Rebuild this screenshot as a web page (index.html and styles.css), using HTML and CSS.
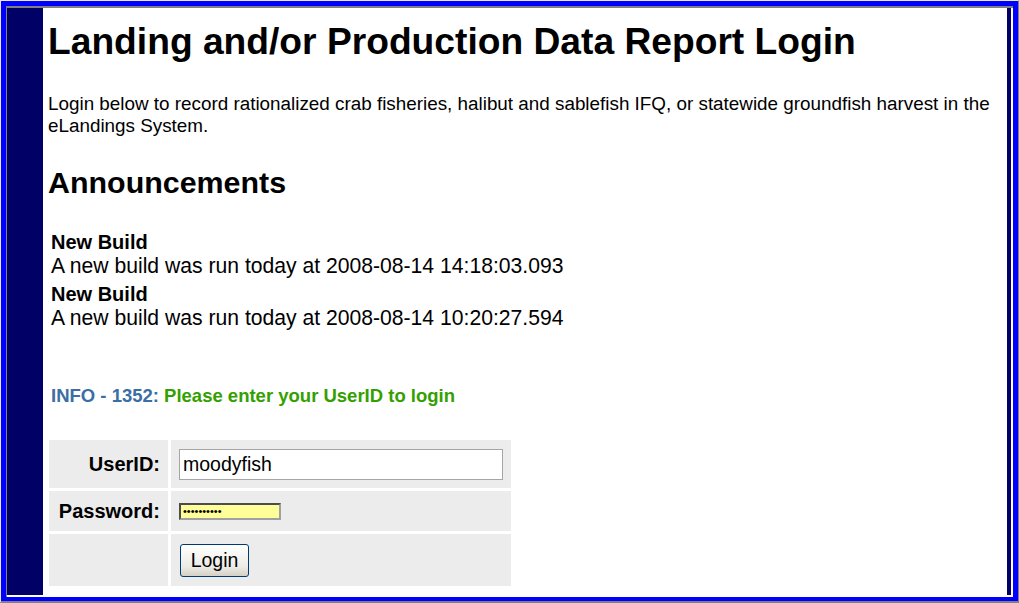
FILE: index.html
```html
<!DOCTYPE html>
<html lang="en">
<head>
  <meta charset="UTF-8" />
  <title>Landing and/or Production Data Report Login</title>
  <link rel="stylesheet" href="styles.css">
</head>
<body>
  <div class="outer">
    <div class="frame">
      <div class="page">
        <div class="sidebar"></div>
        <div class="content">
          <h1>Landing and/or Production Data Report Login</h1>
          <p class="intro">Login below to record rationalized crab fisheries, halibut and sablefish IFQ, or statewide groundfish harvest in the eLandings System.</p>
          <h2>Announcements</h2>
          <div class="news">
            <div class="news-item">
              <strong>New Build</strong>
              <span>A new build was run today at 2008-08-14 14:18:03.093</span>
            </div>
            <div class="news-item">
              <strong>New Build</strong>
              <span>A new build was run today at 2008-08-14 10:20:27.594</span>
            </div>
          </div>
          <p class="info"><span class="info-code">INFO - 1352:</span> <span class="info-msg">Please enter your UserID to login</span></p>
          <form class="login" onsubmit="return false;">
            <table class="login-table">
              <tr class="row-user">
                <th>UserID:</th>
                <td><input class="user" type="text" value="moodyfish"></td>
              </tr>
              <tr class="row-pass">
                <th>Password:</th>
                <td><input class="pass" type="password" value="moodyfish1"></td>
              </tr>
              <tr class="row-btn">
                <th></th>
                <td><button class="btn" type="submit">Login</button></td>
              </tr>
            </table>
          </form>
        </div>
        <div class="rightbar"></div>
      </div>
    </div>
  </div>
</body>
</html>
```

FILE: styles.css
```css
html, body {
  margin: 0;
  padding: 0;
  background: #fff;
}
body {
  font-family: "Liberation Sans", Arial, sans-serif;
  color: #000;
}
.outer {
  width: 1019px;
  height: 603px;
  box-sizing: border-box;
  border-style: solid;
  border-width: 1px 1px 2px 1px;
  border-color: #e8e8e8 #808080 #808080 #e8e8e8;
}
.frame {
  height: 100%;
  box-sizing: border-box;
  border-style: solid;
  border-color: #0000ff;
  border-width: 5px 5px 4px 5px;
}
.page {
  display: flex;
  height: 100%;
  box-sizing: border-box;
  border-top: 2px solid #808080;
  border-left: 1px solid #808080;
  padding: 0 2px 2px 0;
  background: #fff;
}
.sidebar {
  width: 36px;
  background: #000066;
}
.rightbar {
  width: 4px;
  background: #000066;
}
.content {
  flex: 1;
  padding-left: 5px;
  overflow: hidden;
}
h1 {
  font-size: 37.2px;
  font-weight: bold;
  margin: 11px 0 0;
  line-height: 44px;
}
.intro {
  font-size: 18.85px;
  line-height: 22px;
  margin: 30px 0 0;
}
h2 {
  font-size: 30.4px;
  margin: 27px 0 0;
  line-height: 36px;
}
.news {
  margin: 30px 0 0 3px;
}
.news-item {
  display: flex;
  flex-direction: column;
  font-size: 21.15px;
  line-height: 24px;
  margin-bottom: 4px;
}
.news-item strong {
  font-size: 20px;
}
.info {
  font-size: 18.5px;
  font-weight: bold;
  margin: 55px 0 0 3px;
}
.info-code {
  color: #3a6ea5;
}
.info-msg {
  color: #33a000;
}
.login {
  margin: 30px 0 0 -2px;
}
.login-table {
  border-spacing: 3px;
}
.login-table th,
.login-table td {
  background: #ececec;
  font-size: 20px;
  padding: 0 8px;
}
.login-table th {
  width: 103px;
  text-align: right;
}
.login-table td {
  width: 324px;
}
.row-user th, .row-user td { height: 48px; }
.row-pass th, .row-pass td { height: 40px; }
.row-btn th, .row-btn td { height: 52px; }
.user {
  display: block;
  box-sizing: border-box;
  width: 324px;
  height: 31px;
  border: 1px solid #a5a5a5;
  font-family: "Liberation Sans", Arial, sans-serif;
  font-size: 19.5px;
  padding: 0 3px;
  margin: 0;
}
.pass {
  display: block;
  box-sizing: border-box;
  width: 102px;
  height: 17px;
  background: #ffff99;
  border: 2px inset #a0a0a0;
  font-size: 11px;
  padding: 0 2px;
  margin: 0;
}
.btn {
  display: block;
  width: 69px;
  height: 33px;
  margin-left: 1px;
  border: 1px solid #003c74;
  border-radius: 3px;
  background: linear-gradient(#ffffff, #ecebe6 70%, #d6d0c5);
  font-family: "Liberation Sans", Arial, sans-serif;
  font-size: 19.5px;
  color: #000;
  padding: 0;
}
```
